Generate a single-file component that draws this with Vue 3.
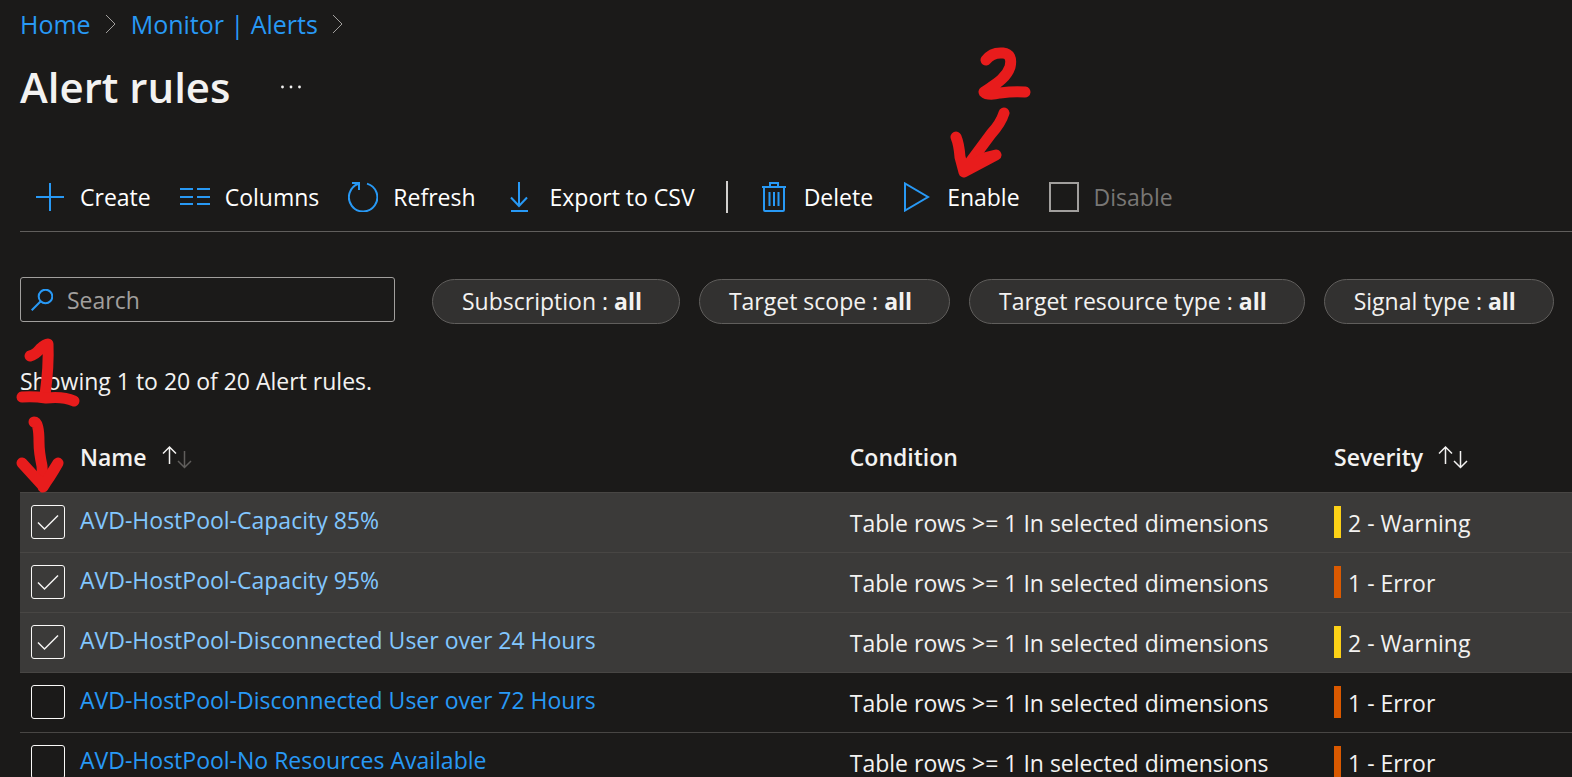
<script setup>
import { ref } from 'vue'

const query = ref('')

const filters = [
  { label: 'Subscription', value: 'all' },
  { label: 'Target scope', value: 'all' },
  { label: 'Target resource type', value: 'all' },
  { label: 'Signal type', value: 'all' }
]

const condition = 'Table rows >= 1 In selected dimensions'

const rules = ref([
  { name: 'AVD-HostPool-Capacity 85%', severity: '2 - Warning', level: 'warning', selected: true },
  { name: 'AVD-HostPool-Capacity 95%', severity: '1 - Error', level: 'error', selected: true },
  { name: 'AVD-HostPool-Disconnected User over 24 Hours', severity: '2 - Warning', level: 'warning', selected: true },
  { name: 'AVD-HostPool-Disconnected User over 72 Hours', severity: '1 - Error', level: 'error', selected: false },
  { name: 'AVD-HostPool-No Resources Available', severity: '1 - Error', level: 'error', selected: false }
])
</script>

<template>
  <div class="page">
    <nav class="crumbs" aria-label="Breadcrumb">
      <a href="#">Home</a>
      <svg class="chevron" viewBox="0 0 12 20" aria-hidden="true"><path d="M1 1l9 9-9 9" /></svg>
      <a href="#">Monitor | Alerts</a>
      <svg class="chevron" viewBox="0 0 12 20" aria-hidden="true"><path d="M1 1l9 9-9 9" /></svg>
    </nav>

    <header class="heading">
      <h1>Alert rules</h1>
      <button class="more" type="button" aria-label="More options">
        <svg viewBox="0 0 22 4" aria-hidden="true"><circle cx="2.5" cy="2" r="1.4" /><circle cx="11" cy="2" r="1.4" /><circle cx="19.5" cy="2" r="1.4" /></svg>
      </button>
    </header>

    <div class="toolbar" role="toolbar" aria-label="Alert rule commands">
      <button type="button">
        <svg class="icon" viewBox="0 0 30 30" aria-hidden="true"><path d="M15 1v28M1 15h28" /></svg>
        <span>Create</span>
      </button>
      <button type="button">
        <svg class="icon" viewBox="0 0 30 30" aria-hidden="true"><path d="M0 7h13M17 7h13M0 15h13M17 15h13M0 22h13M17 22h13" /></svg>
        <span>Columns</span>
      </button>
      <button type="button">
        <svg class="icon" viewBox="0 0 30 30" aria-hidden="true"><path d="M19 1.6A14.2 14.2 0 1 1 10.6 1.8M4 1h7v7" /></svg>
        <span>Refresh</span>
      </button>
      <button type="button">
        <svg class="icon" viewBox="0 0 30 30" aria-hidden="true"><path d="M14 0v24M6 15.5L14 24l8-8.500M6 29h17" /></svg>
        <span>Export to CSV</span>
      </button>
      <span class="divider"></span>
      <button type="button">
        <svg class="icon" viewBox="0 0 30 30" aria-hidden="true"><path d="M3 5h24M11 5V1h8v4M5 5v23q0 1 1 1h18q1 0 1-1V5M10.500 10v14M15 10v14M19.500 10v14" /></svg>
        <span>Delete</span>
      </button>
      <button type="button">
        <svg class="icon" viewBox="0 0 30 30" aria-hidden="true"><path d="M3 1.500v27l23-13.500z" /></svg>
        <span>Enable</span>
      </button>
      <button type="button" disabled>
        <svg class="icon stop" viewBox="0 0 30 30" aria-hidden="true"><path d="M1 1h28v28H1z" /></svg>
        <span>Disable</span>
      </button>
    </div>

    <div class="filters">
      <label class="search">
        <svg viewBox="0 0 22 22" aria-hidden="true"><circle cx="14.500" cy="7.500" r="6.800" /><path d="M9.700 12.300L.7 21.300" /></svg>
        <input v-model="query" type="text" placeholder="Search" aria-label="Search" />
      </label>
      <button v-for="f in filters" :key="f.label" class="pill" type="button">{{ f.label }} : <b>{{ f.value }}</b></button>
    </div>

    <p class="summary">Showing 1 to 20 of 20 Alert rules.</p>

    <table>
      <colgroup>
        <col class="c-check" />
        <col class="c-name" />
        <col class="c-cond" />
        <col />
      </colgroup>
      <thead>
        <tr>
          <td></td>
          <th scope="col">
            <button type="button" class="sort">
              Name
              <svg viewBox="0 0 30 24" aria-hidden="true"><path d="M7.500 19V2M1 8.500L7.500 2l6.500 6.500" /><path class="dim" d="M22.500 6v16M16 16l6.500 6.500L29 16" /></svg>
            </button>
          </th>
          <th scope="col">Condition</th>
          <th scope="col">
            <button type="button" class="sort">
              Severity
              <svg viewBox="0 0 30 24" aria-hidden="true"><path d="M7.500 19V2M1 8.500L7.500 2l6.500 6.500M22.500 6v16M16 16l6.500 6.500L29 16" /></svg>
            </button>
          </th>
        </tr>
      </thead>
      <tbody>
        <tr v-for="r in rules" :key="r.name" :class="{ selected: r.selected }">
          <td>
            <label class="check">
              <input v-model="r.selected" type="checkbox" :aria-label="r.name" />
              <svg v-if="r.selected" viewBox="0 0 34 34" aria-hidden="true"><path d="M7 17.500l6.500 6.500L27 10.500" /></svg>
            </label>
          </td>
          <td class="name"><a href="#">{{ r.name }}</a></td>
          <td>{{ condition }}</td>
          <td><span class="severity" :class="r.level">{{ r.severity }}</span></td>
        </tr>
      </tbody>
    </table>

    <svg class="ink step-one" viewBox="0 0 70 160" aria-hidden="true">
      <path d="M15 20Q20 19 25 13Q30 8 33 8Q34 30 30 59" />
      <path d="M7 61Q18 60 31 62Q48 60 59 65" />
      <path d="M19 86Q24 86 24 106Q24 116 27 130L28 148" />
      <path d="M7 127L28 150Q34 143 43 127L28 151" />
    </svg>
    <svg class="ink step-two" viewBox="0 0 90 140" aria-hidden="true">
      <path d="M36 14Q42 6 53 7Q63 8 60 21C56 33 44 39 34 46Q38 50 50 47Q64 45 75 46" />
      <path d="M54 67Q51 77 41 88L18 119" />
      <path d="M6 91Q9 98 10 111L14 126Q28 115 34 112L46 109L14 126L20 118" />
    </svg>
  </div>
</template>

<style>
body {
  margin: 0;
  background: #1b1a19;
}
</style>

<style scoped>
.page {
  position: relative;
  box-sizing: border-box;
  height: 100vh;
  overflow: hidden;
  padding: 6px 0 0 20px;
  background: #1b1a19;
  color: #f3f2f1;
  font-family: "Segoe UI", "Open Sans", "Noto Sans", sans-serif;
  font-size: 23px;
  line-height: 32px;
}
button {
  padding: 0;
  border: 0;
  background: none;
  color: inherit;
  font: inherit;
  white-space: nowrap;
}
svg {
  flex: none;
  fill: none;
  stroke: currentColor;
}
a {
  color: #2899f5;
  text-decoration: none;
}
.crumbs {
  display: flex;
  align-items: center;
  gap: 14px;
  height: 36px;
  font-size: 25px;
}
.chevron {
  width: 12px;
  height: 20px;
  color: #a19f9d;
}
.heading {
  display: flex;
  align-items: center;
  gap: 49px;
  height: 90px;
}
h1 {
  margin: 0;
  font-size: 42px;
  font-weight: 600;
  line-height: 52px;
}
.more svg {
  display: block;
  width: 22px;
  height: 4px;
  fill: currentColor;
  stroke: none;
}
.toolbar {
  display: flex;
  align-items: center;
  gap: 29px;
  height: 69px;
  padding: 30px 0 0 15px;
  box-sizing: content-box;
  border-bottom: 1px solid #605e5c;
  color: #fff;
}
.toolbar button {
  display: flex;
  align-items: center;
  gap: 15px;
}
.icon {
  width: 30px;
  height: 30px;
  color: #2899f5;
  stroke-width: 2;
}
.toolbar button:disabled {
  color: #797775;
}
.toolbar .stop {
  color: #a19f9d;
}
.divider {
  width: 2px;
  height: 32px;
  margin: 0 2px;
  background: #d2d0ce;
}
.filters {
  display: flex;
  align-items: flex-start;
  gap: 19px;
  margin-top: 45px;
}
.search {
  display: flex;
  align-items: center;
  gap: 14px;
  box-sizing: border-box;
  width: 375px;
  height: 45px;
  margin-right: 18px;
  padding: 0 10px;
  border: 1px solid #a19f9d;
  border-radius: 3px;
}
.search svg {
  width: 22px;
  height: 22px;
  color: #2899f5;
  stroke-width: 2;
}
.search input {
  flex: 1;
  min-width: 0;
  padding: 0;
  border: 0;
  outline: 0;
  background: none;
  color: inherit;
  font: inherit;
}
.search input::placeholder {
  color: #a19f9d;
  opacity: 1;
}
.pill {
  height: 45px;
  margin-top: 2px;
  padding: 0 37px 2px 29px;
  border: 1px solid #605e5c;
  border-radius: 23px;
  background: #323130;
}
.pill b {
  font-weight: 700;
}
.summary {
  margin: 41px 0 0;
}
table {
  width: 100%;
  margin-top: 27px;
  border-collapse: collapse;
  table-layout: fixed;
}
.c-check {
  width: 60px;
}
.c-name {
  width: 49.6%;
}
.c-cond {
  width: 31.2%;
}
th,
td {
  padding: 0;
  text-align: left;
  white-space: nowrap;
}
thead tr {
  height: 68px;
}
th {
  padding-bottom: 2px;
  font-weight: 600;
}
.sort {
  display: flex;
  align-items: center;
  gap: 15px;
}
.sort svg {
  width: 30px;
  height: 24px;
  stroke-width: 1.5;
}
.sort .dim {
  stroke: #605e5c;
}
tbody tr {
  height: 60px;
  border-top: 1px solid #484644;
}
tbody td {
  padding-top: 2px;
}
tbody td.name {
  padding: 0 0 4px;
}
.selected {
  background: #3b3a39;
}
.selected a {
  color: #82c7ff;
}
.check {
  display: grid;
  width: 34px;
  height: 34px;
  margin: 0 0 2px 11px;
}
.check input,
.check svg {
  grid-area: 1 / 1;
  width: 34px;
  height: 34px;
  margin: 0;
}
.check input {
  appearance: none;
  box-sizing: border-box;
  border: 1px solid #faf9f8;
  border-radius: 3px;
}
.check svg {
  pointer-events: none;
  stroke-width: 1.5;
}
.severity {
  display: flex;
  align-items: center;
  gap: 7px;
}
.severity::before {
  content: "";
  width: 7px;
  height: 32px;
  margin-bottom: 2px;
  background: #da5900;
}
.severity.warning::before {
  background: #fcd116;
}
.ink {
  position: absolute;
  color: #e81c1c;
  stroke-width: 11;
  stroke-linecap: round;
  stroke-linejoin: round;
  pointer-events: none;
}
.step-one {
  top: 336px;
  left: 15px;
  width: 70px;
  height: 160px;
}
.step-two {
  top: 46px;
  left: 950px;
  width: 90px;
  height: 140px;
}
</style>
